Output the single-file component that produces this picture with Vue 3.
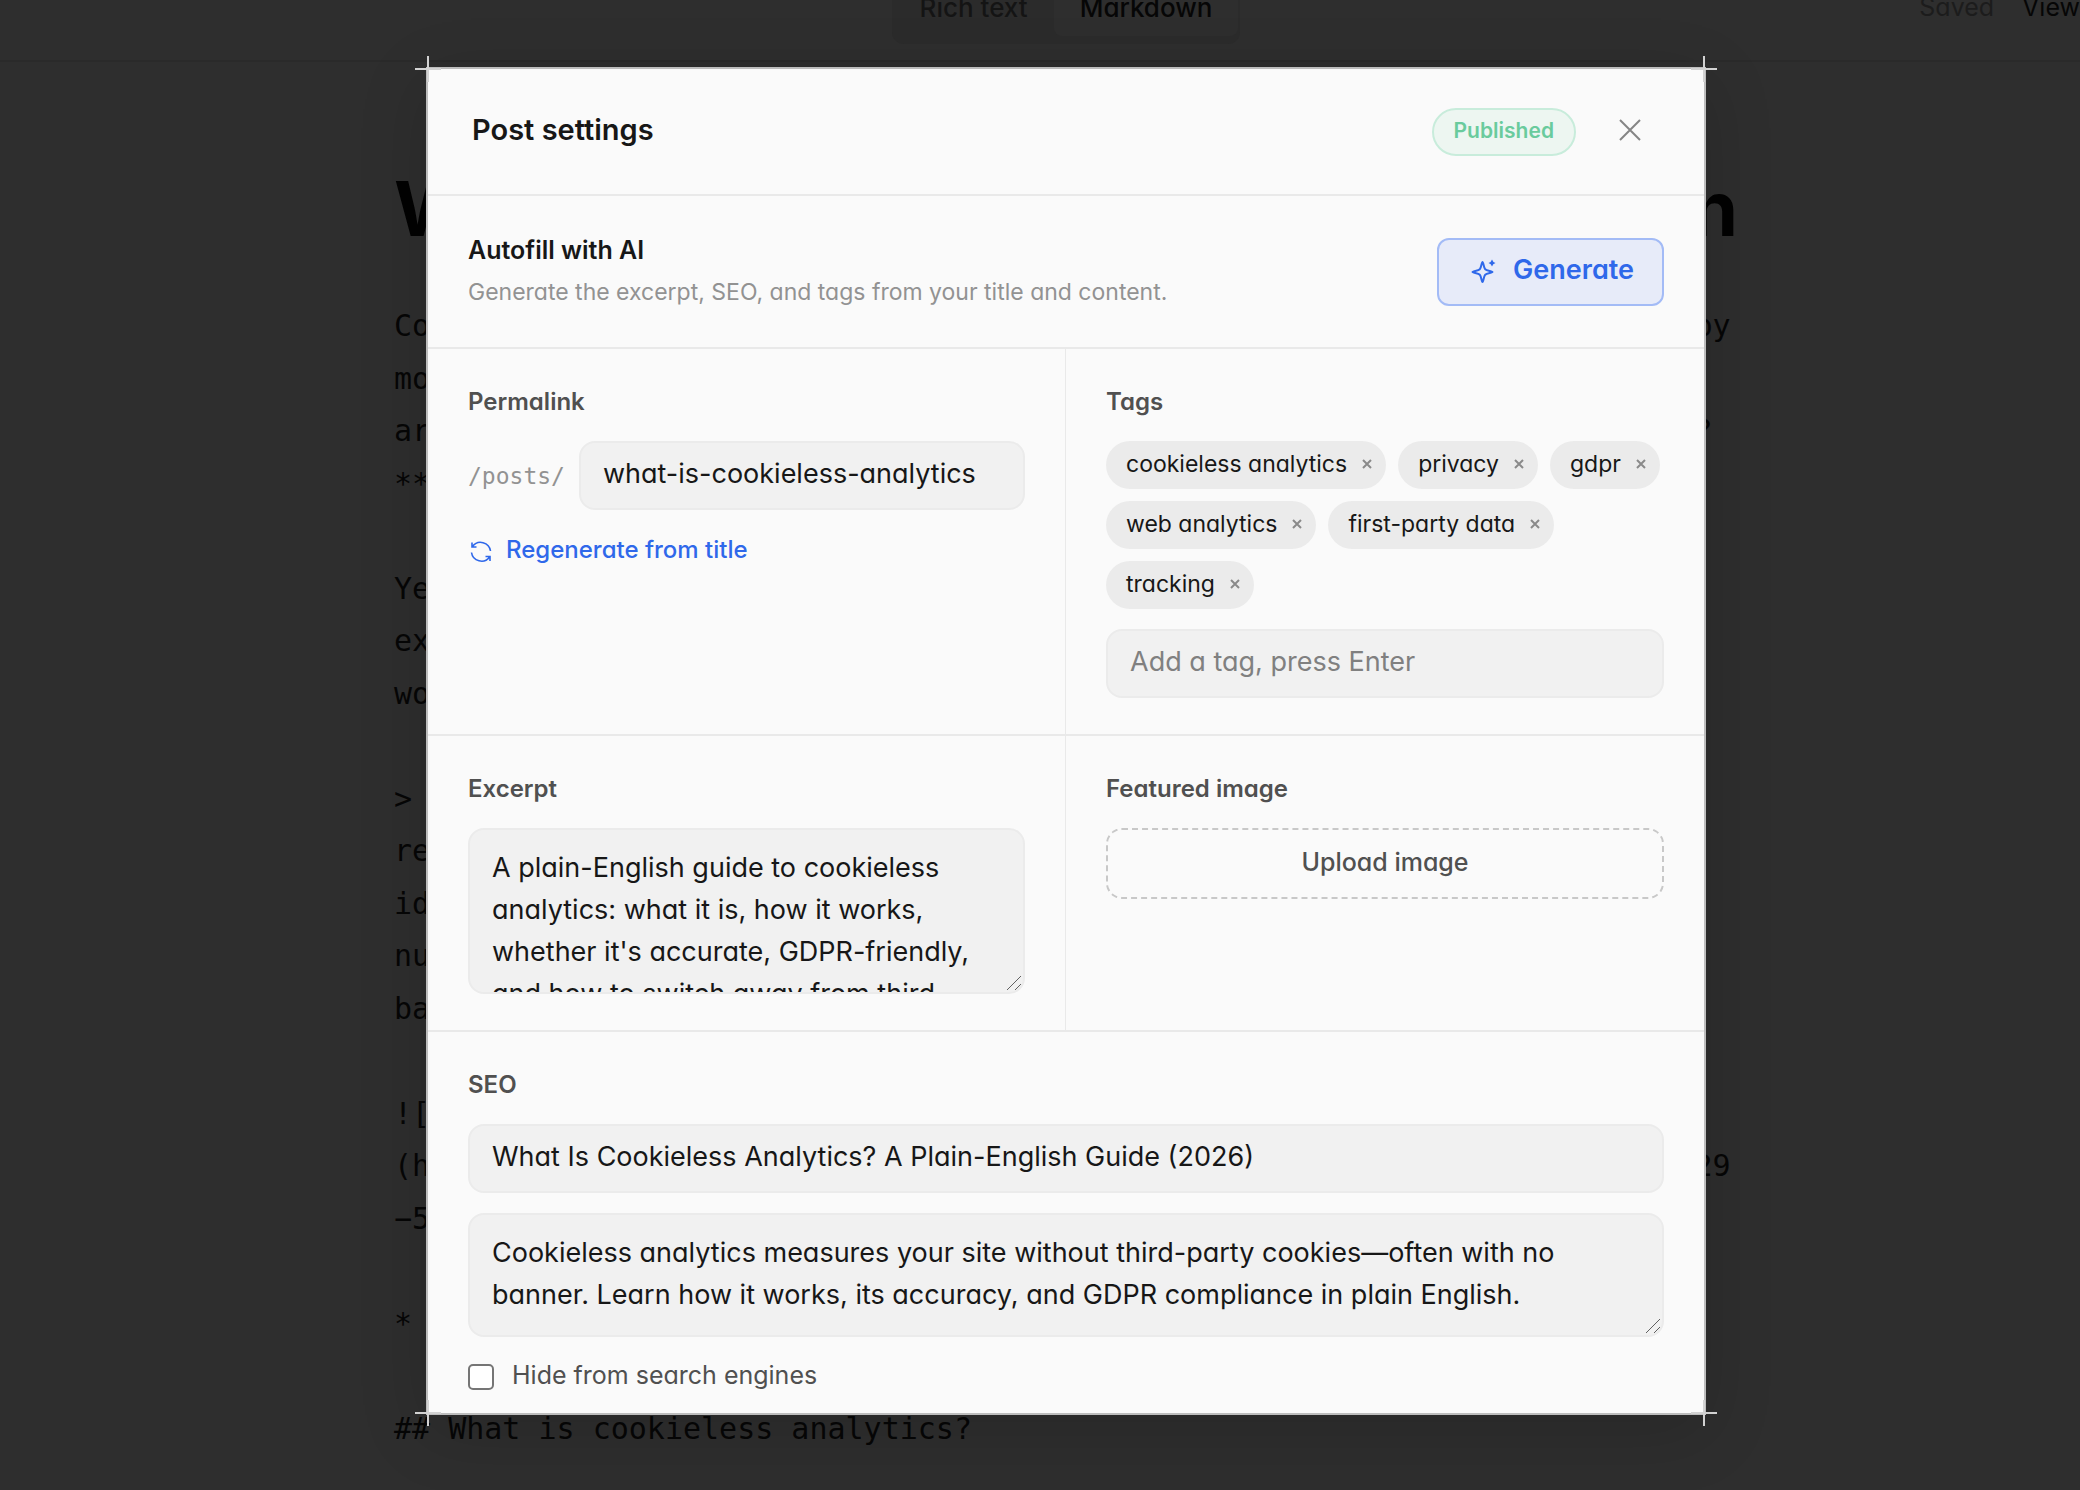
<script setup>
import { ref } from 'vue'

const slug = ref('what-is-cookieless-analytics')
const tags = ref(['cookieless analytics', 'privacy', 'gdpr', 'web analytics', 'first-party data', 'tracking'])
const newTag = ref('')
const excerpt = ref("A plain-English guide to cookieless analytics: what it is, how it works, whether it's accurate, GDPR-friendly, and how to switch away from third")
const seoTitle = ref('What Is Cookieless Analytics? A Plain-English Guide (2026)')
const seoDescription = ref('Cookieless analytics measures your site without third-party cookies—often with no banner. Learn how it works, its accuracy, and GDPR compliance in plain English.')
const hidden = ref(false)

// Each markdown line: its start and its end, the dialog covers the middle.
const lines = [
  ['Co', 'by'], ['mo', ''], ['ar', '? '], ['**', ''], ['', ''],
  ['Ye', ''], ['ex', ''], ['wo', ''], ['', ''],
  ['>', ''], ['re', ''], ['id', ''], ['nu', ''], ['ba', ''], ['', ''],
  ['![', ''], ['(h', '29'], ['−5', ''], ['', ''],
  ['*', ''], ['', ''], ['## What is cookieless analytics?', ''],
]

function addTag() {
  const value = newTag.value.trim()
  if (value) tags.value.push(value)
  newTag.value = ''
}
function removeTag(index) {
  tags.value.splice(index, 1)
}
</script>

<template>
  <div class="screen">
    <div class="page">
      <header class="topbar">
        <div class="switch">
          <button type="button" class="tab">Rich text</button>
          <button type="button" class="tab active">Markdown</button>
        </div>
        <div class="status">
          <span class="saved">Saved</span>
          <a href="#" class="view">View</a>
        </div>
      </header>
      <main class="editor">
        <h1 class="title"><span>W</span><span>n</span></h1>
        <div class="markdown">
          <div v-for="(line, i) in lines" :key="i" class="line">
            <span>{{ line[0] }}</span><span>{{ line[1] }}</span>
          </div>
        </div>
      </main>
    </div>

    <div class="overlay">
      <section class="dialog" role="dialog" aria-labelledby="dialog-title">
        <i class="cross top left"></i>
        <i class="cross top right"></i>
        <i class="cross bottom left"></i>
        <i class="cross bottom right"></i>

        <header class="head">
          <h2 id="dialog-title">Post settings</h2>
          <span class="badge">Published</span>
          <button type="button" class="close" aria-label="Close">
            <svg width="22" height="22" viewBox="0 0 22 22"><path d="M1 1 21 21M21 1 1 21" /></svg>
          </button>
        </header>

        <div class="autofill">
          <div>
            <h3>Autofill with AI</h3>
            <p>Generate the excerpt, SEO, and tags from your title and content.</p>
          </div>
          <button type="button" class="generate">
            <svg width="26" height="26" viewBox="0 0 26 26">
              <path class="stroke" d="M11.500 4C12.400 4 12.700 9.800 14.200 11.300C15.700 12.800 21.500 13.100 21.500 14C21.500 14.900 15.700 15.200 14.200 16.700C12.700 18.200 12.400 24 11.500 24C10.600 24 10.300 18.200 8.800 16.700C7.300 15.200 1.500 14.900 1.500 14C1.500 13.100 7.300 12.800 8.800 11.300C10.300 9.800 10.600 4 11.500 4Z" />
              <path class="solid" d="M21 1.500Q21.800 4.200 24.500 5Q21.800 5.800 21 8.500Q20.200 5.800 17.500 5Q20.200 4.200 21 1.500Z" />
            </svg>
            <span>Generate</span>
          </button>
        </div>

        <div class="grid">
          <div class="cell">
            <label class="label" for="slug">Permalink</label>
            <div class="permalink">
              <span class="prefix">/posts/</span>
              <input id="slug" v-model="slug" class="field" type="text" />
            </div>
            <button type="button" class="regenerate">
              <svg width="26" height="26" viewBox="0 0 26 26">
                <path d="M4 4.500v4.500h4.500M4.500 8.500A10 10 0 0 1 22.500 13M22 23v-4.500h-4.500M21.500 19A10 10 0 0 1 3.500 14.500" />
              </svg>
              <span>Regenerate from title</span>
            </button>
          </div>

          <div class="cell">
            <label class="label" for="new-tag">Tags</label>
            <div class="tags">
              <span v-for="(tag, i) in tags" :key="tag" class="tag">
                {{ tag }}
                <button type="button" :aria-label="'Remove ' + tag" @click="removeTag(i)">
                  <svg width="10" height="10" viewBox="0 0 10 10"><path d="M1 1 9 9M9 1 1 9" /></svg>
                </button>
              </span>
            </div>
            <input id="new-tag" v-model="newTag" class="field" type="text" placeholder="Add a tag, press Enter" @keydown.enter="addTag" />
          </div>

          <div class="cell">
            <label class="label" for="excerpt">Excerpt</label>
            <div class="area excerpt">
              <textarea id="excerpt" v-model="excerpt"></textarea>
              <svg class="grip" width="18" height="18" viewBox="0 0 18 18"><path d="M2 16 16 2M10 16 16 10" /></svg>
            </div>
          </div>

          <div class="cell">
            <h3 class="label">Featured image</h3>
            <button type="button" class="upload">Upload image</button>
          </div>
        </div>

        <div class="seo">
          <label class="label" for="seo-title">SEO</label>
          <input id="seo-title" v-model="seoTitle" class="field" type="text" />
          <div class="area description">
            <textarea v-model="seoDescription" aria-label="SEO description"></textarea>
            <svg class="grip" width="18" height="18" viewBox="0 0 18 18"><path d="M2 16 16 2M10 16 16 10" /></svg>
          </div>
          <label class="check"><input v-model="hidden" type="checkbox" /><span>Hide from search engines</span></label>
        </div>
      </section>
    </div>
  </div>
</template>

<style>
body {
  background: #2e2e2e;
  overflow: hidden;
}
</style>

<style scoped>
* {
  box-sizing: border-box;
}
.screen {
  --line: #e9e9e9;
  --blue: #2f68ea;
  position: relative;
  width: calc(100% + 52px);
  min-height: 100vh;
  overflow: hidden;
  font-family: Inter, "Liberation Sans", sans-serif;
  font-feature-settings: "cv11";
  color: #171717;
}
h1, h2, h3, p {
  margin: 0;
}
button, input, textarea {
  font: inherit;
  font-feature-settings: inherit;
  color: inherit;
}
button {
  border: 0;
  padding: 0;
  background: none;
}
svg {
  display: block;
  flex: none;
  fill: none;
  stroke: currentColor;
}

/* Editor behind the dialog */
.page {
  height: 100vh;
  overflow: hidden;
  background: #2e2e2e;
  color: #060606;
}
.topbar {
  display: grid;
  grid-template-columns: 1fr auto 1fr;
  align-items: center;
  height: 108px;
  margin-top: -46px;
  border-bottom: 2px solid #2a2a2a;
}
.switch {
  grid-column: 2;
  display: flex;
  padding: 8px 2px;
  border-radius: 12px;
  background: #2b2b2b;
}
.tab {
  height: 58px;
  padding: 0 26px;
  border-radius: 8px;
  font-size: 26px;
  font-weight: 500;
  color: #141414;
}
.tab.active {
  background: #2e2e2e;
  color: #060606;
}
.status {
  display: flex;
  justify-content: flex-end;
  gap: 28px;
  padding-right: 52px;
  font-size: 25px;
}
.saved {
  color: #1c1c1c;
}
.view {
  color: #060606;
  text-decoration: none;
}
.editor {
  max-width: 1344px;
  margin: 0 auto;
  padding-top: 102px;
}
.title {
  display: flex;
  justify-content: space-between;
  font-size: 76px;
  line-height: 88px;
  font-weight: 700;
  color: #020202;
}
.markdown {
  width: 74ch;
  margin-top: 48px;
  font-family: "DejaVu Sans Mono", monospace;
  font-size: 30px;
  line-height: 1.75;
}
.line {
  display: flex;
  justify-content: space-between;
  height: 1lh;
  white-space: pre;
}

/* Dialog */
.overlay {
  position: absolute;
  inset: 0;
  padding: 67px 0;
}
.dialog {
  position: relative;
  max-width: 1280px;
  margin: 0 auto;
  border: 2px solid #bdbdbd;
  background: #fafafa;
  box-shadow: 0 16px 64px rgba(0, 0, 0, 0.15);
}
.cross {
  position: absolute;
  width: 26px;
  height: 26px;
  background:
    linear-gradient(#d2d2d2, #d2d2d2) center / 2px 100% no-repeat,
    linear-gradient(#d2d2d2, #d2d2d2) center / 100% 2px no-repeat;
}
.cross.top { top: -13px; }
.cross.bottom { bottom: -13px; }
.cross.left { left: -13px; }
.cross.right { right: -13px; }

.head {
  display: flex;
  align-items: center;
  height: 127px;
  padding: 0 62px 0 44px;
  border-bottom: 2px solid var(--line);
}
.head h2 {
  flex: 1;
  padding-bottom: 4px;
  font-size: 29px;
  line-height: 36px;
  font-weight: 600;
}
.badge {
  height: 48px;
  padding: 0 20px;
  border: 2px solid #c8ecdb;
  border-radius: 24px;
  background: #edf6f1;
  font-size: 21px;
  line-height: 42px;
  font-weight: 600;
  color: #6acb9d;
}
.close {
  margin-left: 43px;
  padding: 0 1px 4px 0;
  color: #858585;
}
.close svg {
  stroke-width: 2;
}
.autofill {
  display: flex;
  justify-content: space-between;
  align-items: center;
  height: 153px;
  padding: 0 40px;
  border-bottom: 2px solid var(--line);
}
.autofill h3 {
  font-size: 25px;
  line-height: 42px;
  font-weight: 600;
}
.autofill p {
  padding-bottom: 2px;
  font-size: 23px;
  line-height: 42px;
  color: #929292;
}
.generate {
  display: flex;
  align-items: center;
  gap: 16px;
  height: 68px;
  padding: 0 28px 2px 32px;
  border: 2px solid #a3bbf6;
  border-radius: 12px;
  background: #e7ebf9;
  font-size: 27px;
  font-weight: 600;
  color: var(--blue);
}
.generate span,
.regenerate span {
  padding-bottom: 2px;
}
.generate .stroke {
  stroke-width: 2;
  stroke-linejoin: round;
}
.generate .solid {
  fill: currentColor;
  stroke: none;
}

.grid {
  display: grid;
  grid-template-columns: 1fr 1fr;
}
.cell {
  padding: 35px 40px 36px;
  border-bottom: 2px solid var(--line);
}
.cell:nth-child(odd) {
  border-right: 1px solid var(--line);
}
.label {
  display: block;
  margin-bottom: 21px;
  font-size: 24px;
  line-height: 36px;
  font-weight: 600;
  color: #505050;
}
.field {
  display: block;
  width: 100%;
  height: 69px;
  padding: 0 22px 4px;
  border: 2px solid #ebebeb;
  border-radius: 16px;
  background: #f1f1f1;
  font-size: 27px;
}
.field::placeholder {
  color: #808080;
  opacity: 1;
}
.permalink {
  display: flex;
  align-items: center;
  gap: 14px;
}
.prefix {
  font-family: "DejaVu Sans Mono", monospace;
  font-size: 23px;
  color: #929292;
}
.permalink .field {
  flex: 1;
  min-width: 0;
}
.regenerate {
  display: flex;
  align-items: center;
  gap: 12px;
  margin-top: 22px;
  font-size: 24px;
  line-height: 36px;
  font-weight: 500;
  color: var(--blue);
}
.regenerate svg {
  stroke-width: 1.6;
}
.tags {
  display: flex;
  flex-wrap: wrap;
  gap: 12px;
  margin-bottom: 20px;
}
.tag {
  display: flex;
  align-items: center;
  gap: 15px;
  height: 48px;
  padding: 0 14px 2px 20px;
  border-radius: 24px;
  background: #ebebeb;
  font-size: 23px;
}
.tag button {
  color: #8a8a8a;
}
.tag svg {
  stroke-width: 2;
}
.area {
  position: relative;
  overflow: hidden;
  border: 2px solid #ebebeb;
  border-radius: 16px;
  background: #f1f1f1;
}
.area textarea {
  display: block;
  width: 100%;
  height: 100%;
  padding: 17px 22px;
  border: 0;
  background: none;
  font-size: 27px;
  line-height: 42px;
  resize: none;
  overflow: hidden;
}
.excerpt {
  height: 166px;
}
.description {
  height: 124px;
  margin-top: 20px;
}
.grip {
  position: absolute;
  right: 0;
  bottom: 0;
  color: #606060;
}
.upload {
  width: 100%;
  height: 71px;
  padding-bottom: 4px;
  border: 2px dashed #c8c8c8;
  border-radius: 16px;
  font-size: 25px;
  font-weight: 500;
  color: #505050;
}
.seo {
  padding: 35px 40px 16px;
}
.check {
  display: flex;
  align-items: center;
  gap: 18px;
  margin-top: 20px;
  font-size: 25px;
  line-height: 36px;
  color: #505050;
}
.check span {
  padding-bottom: 4px;
}
.check input {
  appearance: none;
  width: 26px;
  height: 26px;
  margin: 0;
  border: 2px solid #757575;
  border-radius: 5px;
  background: #ffffff;
}
</style>
